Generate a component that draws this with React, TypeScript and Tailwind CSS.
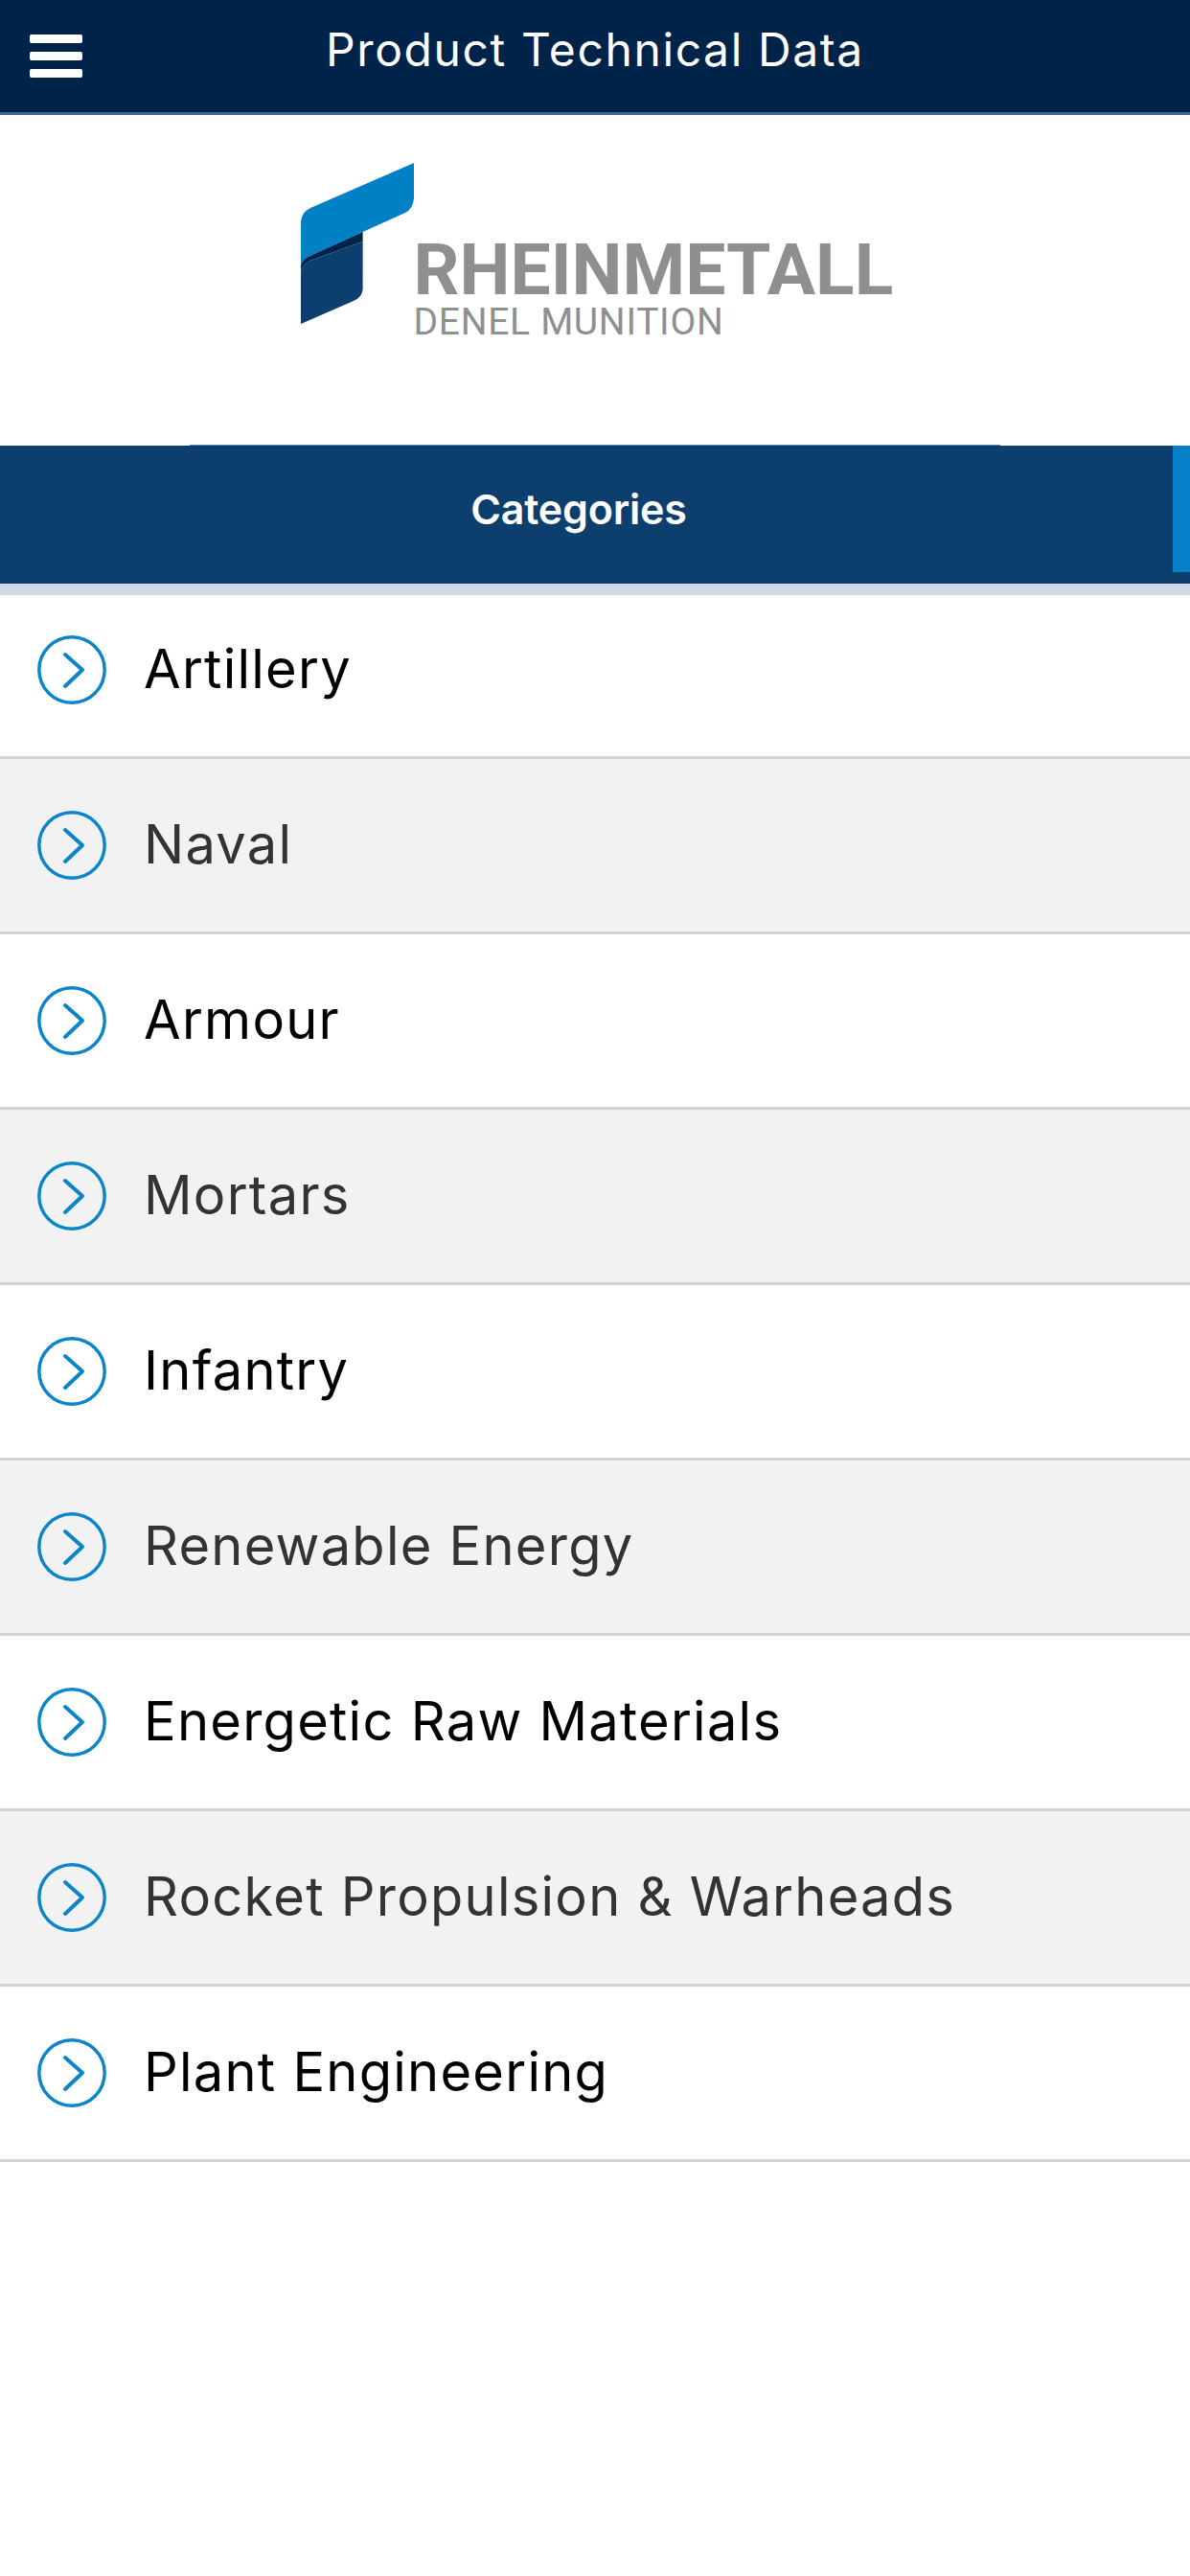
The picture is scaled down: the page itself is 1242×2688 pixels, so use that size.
import React from 'react';

const categories = [
  'Artillery',
  'Naval',
  'Armour',
  'Mortars',
  'Infantry',
  'Renewable Energy',
  'Energetic Raw Materials',
  'Rocket Propulsion & Warheads',
  'Plant Engineering',
];

function CircleChevron() {
  return (
    <svg viewBox="0 0 72 72" className="w-[72px] h-[72px] shrink-0" fill="none" stroke="#0a85c9">
      <circle cx="36" cy="36" r="34.2" strokeWidth="3.4" />
      <path d="M29 20 L47 36 L29 53" strokeWidth="4" strokeLinecap="round" strokeLinejoin="round" />
    </svg>
  );
}

function Logo() {
  return (
    <div className="flex items-start w-[615px] h-[168px]">
      <svg viewBox="0 0 118 168" className="w-[118px] h-[168px] shrink-0">
        <path d="M0 62 Q0 52 10 47 L118 0 L118 37 Q117 48 109 52 L64.6 72 L9.5 97 Q2 100 0 107 Z" fill="#0081c6" />
        <path d="M0 107 Q2 100 9.5 97 L64.6 72 L64.6 82 L9.5 102 Q2 106 0 113 Z" fill="#002349" />
        <path d="M0 113 Q2 106 9.5 102 L64.6 82 L64.6 132 Q64 140 55 144 L0 168 Z" fill="#0d3f6e" />
      </svg>
      <div className="flex flex-col items-start mt-[82px] font-['Roboto',sans-serif] text-[#8e9090]">
        <span className="text-[75px] font-bold h-[59px] leading-[59px] whitespace-nowrap">RHEINMETALL</span>
        <span className="text-[39px] mt-[8px] h-[34px] leading-[34px] tracking-[0.7px] whitespace-nowrap">DENEL MUNITION</span>
      </div>
    </div>
  );
}

export default function App() {
  return (
    <div className="w-[1242px] h-[2688px] bg-white flex flex-col font-['Inter',sans-serif]">
      {/* Top bar */}
      <div className="relative h-[120px] shrink-0 bg-[#002349] border-b-[3px] border-[#3f6a94] flex items-start justify-center pt-[22px]">
        <div className="absolute left-[31px] top-[36px] flex flex-col gap-[9px]">
          <div className="w-[55px] h-[9px] rounded-[2px] bg-white" />
          <div className="w-[55px] h-[9px] rounded-[2px] bg-white" />
          <div className="w-[55px] h-[9px] rounded-[2px] bg-white" />
        </div>
        <span className="text-white text-[48px] leading-[60px] tracking-[1.6px]">Product Technical Data</span>
      </div>

      {/* Logo */}
      <div className="h-[345px] shrink-0 flex justify-center pt-[50px]">
        <Logo />
      </div>

      {/* Categories tab */}
      <div className="relative h-[144px] shrink-0 bg-[#0d3f6e] flex items-start">
        <div className="absolute left-[198px] top-[-1px] w-[846px] h-px bg-[#5b86bd]" />
        <div className="flex-1 h-[132px] flex items-center justify-center pr-[16px]">
          <span className="text-white text-[43px] font-semibold tracking-[-0.2px]">Categories</span>
        </div>
        <div className="w-[18px] h-[132px] bg-[#0680c8]" />
      </div>
      <div className="h-[12px] shrink-0 bg-[#d0d9e2]" />

      {/* List */}
      <div className="flex flex-col">
        {categories.map((name, i) => (
          <div
            key={name}
            className={`flex items-center gap-[39px] pl-[39px] border-b-[3px] border-[#d3d3d3] ${
              i === 0 ? 'h-[171px] pb-[12px]' : 'h-[183px]'
            } ${i % 2 === 1 ? 'bg-[#f2f2f2] text-[#333333]' : 'bg-white text-black'}`}
          >
            <CircleChevron />
            <span className="text-[56px] leading-none tracking-[1.25px] mb-[3px]">{name}</span>
          </div>
        ))}
      </div>
    </div>
  );
}
